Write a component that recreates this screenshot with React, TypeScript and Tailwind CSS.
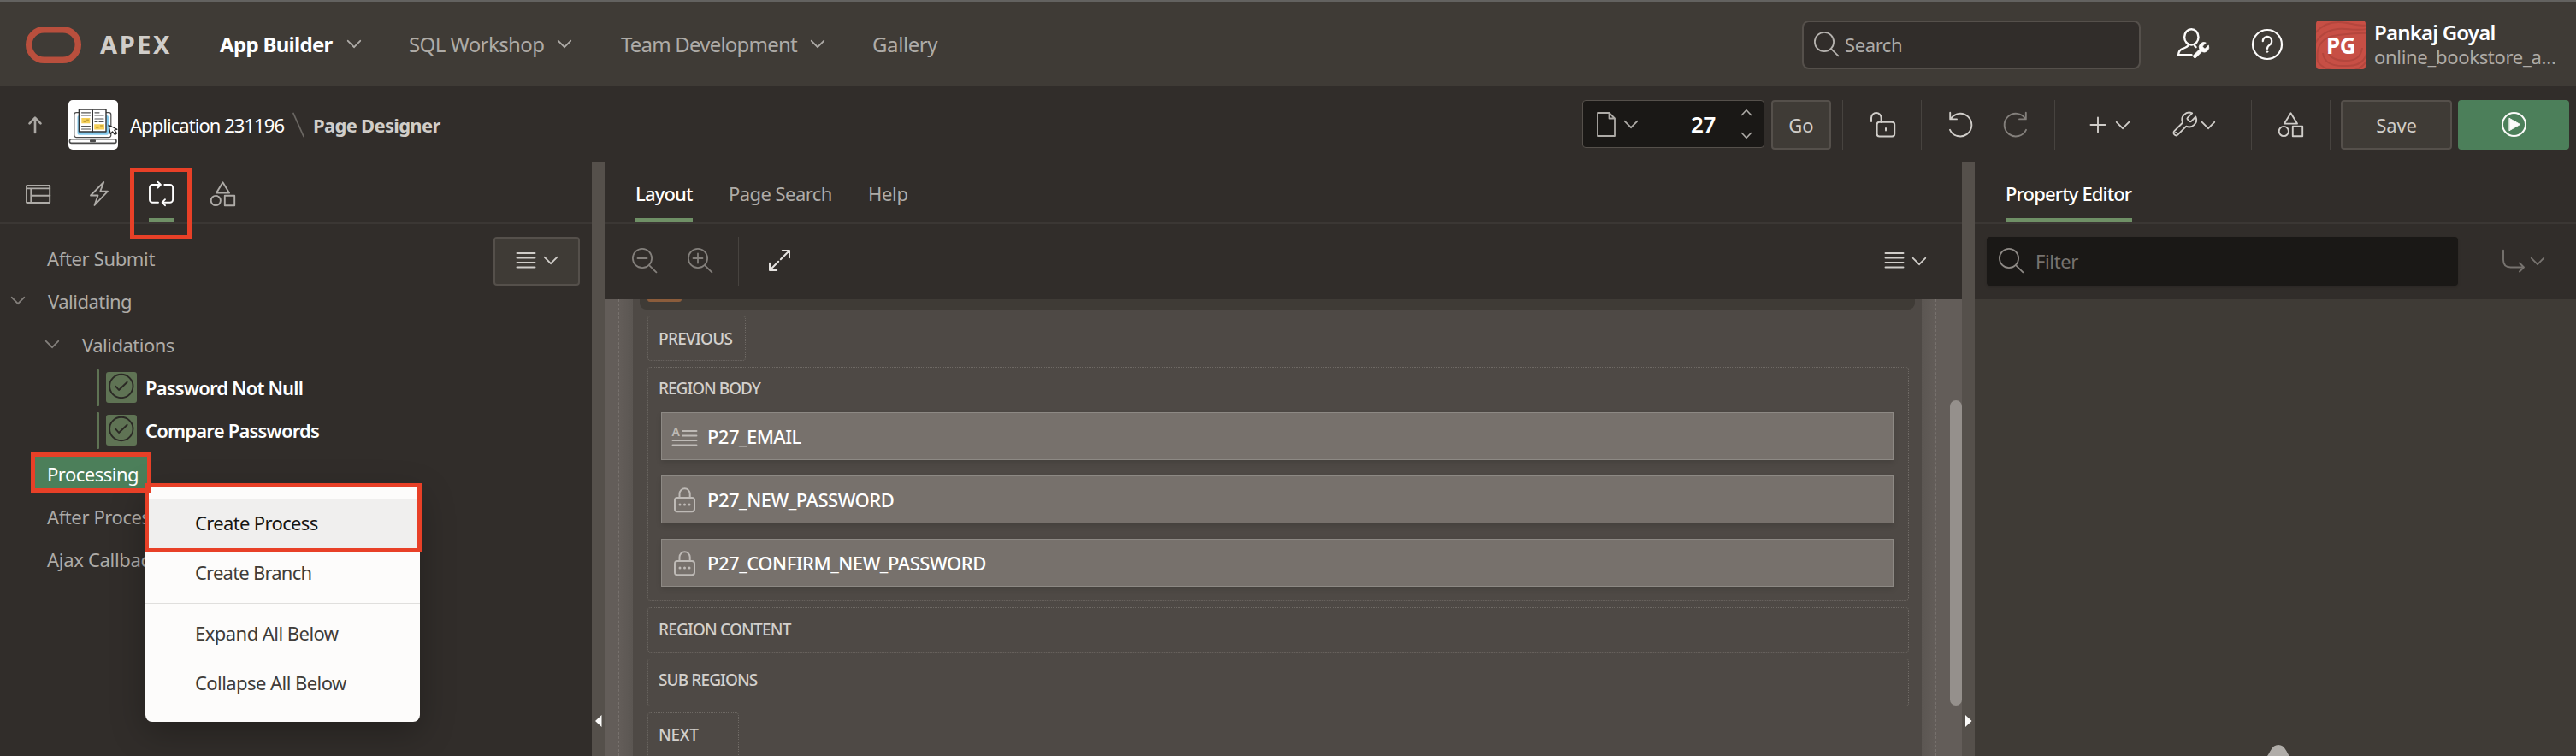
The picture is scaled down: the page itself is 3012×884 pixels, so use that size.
import type { ReactNode } from 'react';

type IconProps = { w: number; h: number; className?: string; sw?: number; children: ReactNode };

function Icon({ w, h, className = '', sw = 2, children }: IconProps) {
  return (
    <svg
      width={w}
      height={h}
      viewBox={`0 0 ${w} ${h}`}
      fill="none"
      stroke="currentColor"
      strokeWidth={sw}
      strokeLinecap="round"
      strokeLinejoin="round"
      className={`block shrink-0 overflow-visible ${className}`}
    >
      {children}
    </svg>
  );
}

const Chevron = ({ className = '' }: { className?: string }) => (
  <Icon w={16} h={9} className={className} sw={1.9}>
    <path d="M0.8 0.8 8 8.2 15.2 0.8" />
  </Icon>
);

const Lines = () => (
  <Icon w={22} h={19} sw={1.9}>
    <path d="M.5 1h21M.5 6.5h21M.5 12h21M.5 17.5h21" />
  </Icon>
);

const Magnifier = ({ className = '', children }: { className?: string; children?: ReactNode }) => (
  <Icon w={29} h={29} className={className} sw={1.8}>
    <circle cx="12" cy="12" r="11.1" />
    <path d="m20 20.2 8.4 8.2" />
    {children}
  </Icon>
);

const Shapes = ({ className = '' }: { className?: string }) => (
  <Icon w={29} h={29} className={className} sw={1.9}>
    <path d="M14.5 1.2 22 13.6H7z" />
    <circle cx="6.3" cy="22.5" r="5.6" />
    <rect x="16.8" y="16.8" width="11.4" height="11.4" />
  </Icon>
);

const wrenchPath =
  'M14.7 6.3a1 1 0 0 0 0 1.4l1.6 1.6a1 1 0 0 0 1.4 0l3.77-3.77a6 6 0 0 1-7.94 7.94l-6.91 6.91a2.12 2.12 0 0 1-3-3l6.91-6.91a6 6 0 0 1 7.94-7.94l-3.76 3.76z';

const BookIcon = () => (
  <Icon w={58} h={58} className="rounded-[5px] bg-white text-[#4b4b4b]" sw={1.2}>
    <rect x="6.8" y="14.6" width="43" height="29" rx="2.5" fill="#fff" />
    <rect x="10.5" y="18" width="36.5" height="22.8" rx="2" fill="#86cbee" stroke="none" />
    <path d="M12.4 11H44v26H12.4z" fill="#fff" stroke="#333" strokeWidth="1.4" />
    <path d="M28.2 12v25" stroke="#333" strokeWidth="1.6" />
    <path d="M15.5 14.8h10M15.5 18h10M31 14.8h5M31 18h10M31 22h10M31 25.5h3M36 25.5h5M15.5 30.5h10M15.5 34h10" stroke="#555" />
    <path d="M15.3 21h10v6.2h-10zM30.2 28.2h11.8v6.2H30.2z" fill="#f5cf57" stroke="none" />
    <path d="M18 25.2h2M21.5 23.2h2M32.5 32h2.5M37.5 30h2.5" stroke="#a98a2c" strokeWidth="1" />
    <rect x="1.4" y="45.8" width="54.6" height="4.6" rx="2.2" fill="#fff" strokeWidth="1.6" />
    <rect x="25" y="46.2" width="7" height="3" rx="1" fill="#4b4b4b" stroke="none" />
    <path d="m47 29.2 2.2 10.4 2.3-2.6 3 3.6 2.2-1.8-3-3.6 3.3-1z" fill="#fff" stroke="#222" />
  </Icon>
);

const Divider = ({ className }: { className: string }) => <div className={`h-[58px] w-px bg-[#47433f] ${className}`} />;

function NavItem({ label, className }: { label: string; className: string }) {
  return (
    <div className={`flex items-center justify-between whitespace-nowrap ${className}`}>
      <span>{label}</span>
      <Chevron />
    </div>
  );
}

function Header() {
  return (
    <header className="flex h-[99px] shrink-0 items-center bg-[#3f3b36] pl-[30px] text-[24px] leading-[32px] text-[#aeaba7]">
      <Icon w={65} h={43} sw={7.5} className="mt-[2px] text-[#b94f3d]">
        <rect x="3.75" y="3.75" width="57.5" height="35.5" rx="17.7" />
      </Icon>
      <span className="ml-[22px] w-[140px] text-[29px] font-bold tracking-[2.6px] text-[#d0cdc9]">APEX</span>
      <NavItem label="App Builder" className="w-[165px] font-bold tracking-[-0.7px] text-white [&>svg]:text-[#aeaba7]" />
      <NavItem label="SQL Workshop" className="ml-[56px] w-[190px] tracking-[-0.58px]" />
      <NavItem label="Team Development" className="ml-[58px] w-[238px] tracking-[-0.8px]" />
      <span className="ml-[56px] tracking-[-0.4px]">Gallery</span>

      <div className="ml-auto mt-[2px] flex h-[57px] w-[396px] items-center rounded-[8px] border-2 border-[#55504b] bg-[#312d2a] pl-[12px]">
        <Magnifier className="-mt-[2px] text-[#b5b2ae]" />
        <span className="-mt-px ml-[7px] text-[22px] tracking-[-0.4px]">Search</span>
      </div>
      <Icon w={37} h={37} sw={2.4} className="ml-[43px] text-[#fcfbfa]">
        <ellipse cx="16.3" cy="10.4" rx="8.2" ry="9.2" />
        <path d="M12.6 18.6v1.2c-.6 2.2-3 3-6.3 4-3.4 1.1-5 2.8-5.2 7.500H16.500" />
        <path d="M20 18.600v1.200q.4 1.400 1.600 2.300" />
        <g transform="translate(15.500 14.500) scale(0.970)">
          <path d={wrenchPath} fill="currentColor" strokeWidth="0.600" />
        </g>
      </Icon>
      <Icon w={36} h={36} sw={2.2} className="ml-[50px] text-[#fcfbfa]">
        <circle cx="18" cy="18" r="17" />
        <path d="M12.800 14.200a5.200 5.200 0 1 1 8.200 4.200c-2 1.400-3 2.400-3 4.600" />
        <circle cx="18" cy="26.600" r="0.800" fill="currentColor" strokeWidth="1" />
      </Icon>
      <div className="relative ml-[39px] mt-[2px] flex h-[57px] w-[58px] items-center justify-center overflow-hidden rounded-[4px] bg-[#c74f45]">
        <svg viewBox="0 0 58 57" className="absolute inset-0" fill="none" stroke="#b4463d" strokeWidth="2">
          <path d="M-2 16Q12-2 36 3T60 4M-2 28Q10 8 34 10T60 9M2 48Q-2 20 26 17T60 15M60 34Q58 54 34 53Q10 54 8 38M54 32Q52 48 33 47Q16 46 14 36M60 46Q52 60 34 59Q10 60 2 48" />
        </svg>
        <span className="relative text-[26px] font-bold tracking-[-0.5px] text-white">PG</span>
      </div>
      <div className="ml-[10px] w-[236px] whitespace-nowrap leading-[29px]">
        <div className="text-[24px] font-semibold tracking-[-0.8px] text-white">Pankaj Goyal</div>
        <div className="text-[22px] tracking-[-0.3px]">online_bookstore_a…</div>
      </div>
    </header>
  );
}

function Toolbar() {
  return (
    <div className="flex h-[89px] shrink-0 items-start border-b border-[#3f3b38] bg-[#312d2a] pl-[33px] pt-[16px] text-[22px] leading-[30px] text-[#d0cdc9]">
      <div className="flex h-[58px] items-center">
        <Icon w={16} h={20} sw={2.6} className="text-[#aaa7a3]">
          <path d="M8 19V2M1.500 8.300 8 1.700l6.500 6.600" />
        </Icon>
        <div className="ml-[31px]">
          <BookIcon />
        </div>
        <span className="ml-[14px] w-[190px] whitespace-nowrap tracking-[-0.95px] text-white">Application 231196</span>
        <Icon w={14} h={28} sw={1.8} className="text-[#6b6763]">
          <path d="M1 .5 13 27.500" />
        </Icon>
        <span className="ml-[10px] whitespace-nowrap font-bold tracking-[-0.7px]">Page Designer</span>
      </div>

      <div className="ml-auto flex h-[56px] w-[213px] rounded-[4px] border border-[#55504b] bg-[#1a1816]">
        <div className="flex flex-1 items-center pl-[16px] text-[#aeaba7]">
          <Icon w={22} h={29} sw={1.8}>
            <path d="M1 1h13.500L21 7.500V28H1zM14.500 1v6.500H21" />
          </Icon>
          <Chevron className="ml-[10px]" />
          <span className="ml-auto pr-[14px] text-[26px] font-semibold tracking-[-0.4px] text-white">27</span>
        </div>
        <div className="flex w-[42px] flex-col items-center justify-between border-l border-[#55504b] py-[10px] text-[#aeaba7]">
          <Icon w={12} h={7} sw={1.6}>
            <path d="M.6 6.500 6 .8l5.400 5.700" />
          </Icon>
          <Icon w={12} h={7} sw={1.6}>
            <path d="M.6.5 6 6.200 11.400.5" />
          </Icon>
        </div>
      </div>
      <button className="ml-[8px] h-[58px] w-[70px] rounded-[4px] border-2 border-[#55504b] bg-[#3f3b36] tracking-[0.1px]">Go</button>
      <Divider className="ml-[13px]" />
      <Icon w={29} h={29} className="ml-[32px] mt-[14px]" sw={2}>
        <path d="M1 11V6.800a5.800 5.800 0 0 1 11.600 0V12" />
        <rect x="7.600" y="11.800" width="20.600" height="16.600" rx="3" />
        <path d="M18 19v2.400" />
      </Icon>
      <Divider className="ml-[30px]" />
      <Icon w={28} h={29} className="ml-[32px] mt-[14px]" sw={1.9}>
        <path d="M1.200.8v7.600h7.800M1.800 8A13.300 13.300 0 1 1 1 20.800" />
      </Icon>
      <Icon w={28} h={29} className="ml-[35px] mt-[14px] text-[#837f7b]" sw={1.9}>
        <path d="M26.800.8v7.600H19M26.200 8A13.300 13.300 0 1 0 27 20.800" />
      </Icon>
      <Divider className="ml-[32px]" />
      <Icon w={18} h={18} className="ml-[41px] mt-[20px]" sw={1.9}>
        <path d="M9 .5v17M.5 9h17" />
      </Icon>
      <Chevron className="ml-[12px] mt-[25px]" />
      <Icon w={28} h={28} className="ml-[50px] mt-[14px]">
        <g transform="translate(-2.700 -2.200) scale(1.400)">
          <path d={wrenchPath} strokeWidth="1.350" />
        </g>
        <circle cx="4" cy="24" r="0.700" strokeWidth="1" />
      </Icon>
      <Chevron className="ml-[6px] mt-[25px]" />
      <Divider className="ml-[42px]" />
      <Shapes className="ml-[31px] mt-[14px]" />
      <Divider className="ml-[31px]" />
      <button className="ml-[12px] h-[58px] w-[130px] rounded-[4px] border-2 border-[#55504b] bg-[#3f3b36] tracking-[-0.1px]">Save</button>
      <button className="ml-[7px] mr-[8px] flex h-[58px] w-[130px] items-center justify-center rounded-[4px] bg-[#4c7f5a] text-[#fcfbfa]">
        <Icon w={29} h={29} sw={2} className="-mt-px">
          <circle cx="14.500" cy="14.500" r="13.500" />
          <path d="M9.200 7.400 21.600 14.500 9.200 21.600z" fill="currentColor" strokeWidth="1" />
        </Icon>
      </button>
    </div>
  );
}

type RowProps = { label: string; pad: string; text: string; open?: boolean; check?: boolean };

const rows: RowProps[] = [
  { label: 'After Submit', pad: 'pl-[55px]', text: 'tracking-[-0.35px]' },
  { label: 'Validating', pad: 'pl-[13px]', text: 'ml-[27px] tracking-[-0.5px]', open: true },
  { label: 'Validations', pad: 'pl-[53px]', text: 'ml-[27px] tracking-[-0.5px]', open: true },
  { label: 'Password Not Null', pad: 'pl-[113px]', text: 'ml-[10px] font-semibold tracking-[-0.83px] text-white', check: true },
  { label: 'Compare Passwords', pad: 'pl-[113px]', text: 'ml-[10px] font-semibold tracking-[-0.8px] text-white', check: true },
  {
    label: 'Processing',
    pad: 'pl-[38px]',
    text: 'flex h-[40px] w-[136px] items-center bg-[#4c7f5a] pl-[17px] tracking-[-0.5px] text-white',
  },
  { label: 'After Processing', pad: 'pl-[55px]', text: 'tracking-[-0.4px]' },
  { label: 'Ajax Callback', pad: 'pl-[55px]', text: 'tracking-[-0.3px]' },
];

function TreeRow({ label, pad, text, open, check }: RowProps) {
  return (
    <li className={`flex h-[50.3px] items-center whitespace-nowrap ${pad}`}>
      {open && <Chevron className="mt-[-1px] text-[#837f7b]" />}
      {check && (
        <>
          <i className="h-[43px] w-[3px] rounded-[1px] bg-[#5f7354]" />
          <Icon w={36} h={36} sw={1.9} className="ml-[8px] rounded-[3px] bg-[#5f7354] text-[#2b2925]">
            <circle cx="17.800" cy="16.500" r="13.700" />
            <path d="m11.400 16.800 3.600 4.200 9.700-9.200" />
          </Icon>
        </>
      )}
      <span className={text}>{label}</span>
    </li>
  );
}

function LeftPanel() {
  return (
    <section className="flex w-[692px] shrink-0 flex-col overflow-hidden bg-[#312d2a] text-[#aeaba7]">
      <div className="flex h-[72px] shrink-0 items-start border-b-2 border-[#3b3734] pl-[30px]">
        <Icon w={29} h={22} className="mt-[26px]" sw={1.9}>
          <rect x="1" y="1" width="27.200" height="20" rx="0.500" />
          <path d="M1 4.400h27.200M6.300 4.400V21M6.300 12.800h22" />
        </Icon>
        <Icon w={22} h={29} className="ml-[46px] mt-[22px]" sw={1.8}>
          <path d="M16.300 1 1 16.500h8.500L5.500 28 21 11.600h-8.700z" />
        </Icon>
        <div className="ml-[47px] h-[70px] w-[29px] border-b-[5px] border-[#6f9066] pt-[22px]">
          <Icon w={29} h={29} className="text-white" sw={1.9}>
            <path d="M11 24.700H4.300A3.300 3.300 0 0 1 1 21.400V7.300A3.300 3.300 0 0 1 4.300 4H14M10.500.8 14 4l-3.500 3.500M18.300 4h6.500a3.300 3.300 0 0 1 3.300 3.300v14.100a3.300 3.300 0 0 1-3.300 3.300h-9.100M19 21.200l-3.300 3.500 3.300 3.500" />
          </Icon>
        </div>
        <Shapes className="ml-[43px] mt-[22px]" />
      </div>
      <div className="flex items-start pt-[15px] text-[22px] leading-[30px]">
        <ul className="flex-1">
          {rows.map((r) => (
            <TreeRow key={r.label} {...r} />
          ))}
        </ul>
        <button className="mr-[14px] flex h-[57px] w-[101px] items-center justify-center gap-[10px] rounded-[4px] border-2 border-[#55504b] bg-[#3f3b36] pb-[2px] text-[#d0cdc9]">
          <Lines />
          <Chevron />
        </button>
      </div>
    </section>
  );
}

function Tab({ label, className }: { label: string; className: string }) {
  return (
    <span className={`flex h-[70px] items-center whitespace-nowrap border-b-[5px] pt-[7px] leading-[30px] ${className}`}>{label}</span>
  );
}

const LockIcon = () => (
  <Icon w={25} h={29} sw={2}>
    <path d="M6.500 11.500V7.400a6.100 6.100 0 0 1 12.200 0v4.100" />
    <rect x="1" y="12" width="23" height="16.200" rx="3" />
    <path d="M7 20h.01M12.500 20h.01M18 20h.01" strokeWidth="3" />
  </Icon>
);

const TextIcon = () => (
  <Icon w={29} h={23} sw={1.9}>
    <text x="-0.500" y="11" fontSize="14" fontFamily="Noto Sans, sans-serif" fontWeight="600" fill="currentColor" stroke="none">
      A
    </text>
    <path d="M12 5h16.500M12 10.500h16.500M.5 16h28M.5 21.500h28" />
  </Icon>
);

function PageItem({ label, lock, className }: { label: string; lock?: boolean; className: string }) {
  return (
    <div className="flex h-[56px] w-[1441px] items-center border border-[#8d8984] bg-[#77716c] pl-[12px] text-[22px] leading-[30px] text-white shadow-[0_3px_6px_rgba(0,0,0,0.12)]">
      <span className="flex w-[29px] justify-center text-[#bebab6]">{lock ? <LockIcon /> : <TextIcon />}</span>
      <span className={`-mt-px ml-[12px] font-medium ${className}`}>{label}</span>
    </div>
  );
}

const slot = 'rounded-[4px] border border-dotted border-[#6e6964] pl-[12px]';

function LayoutPanel() {
  return (
    <section className="flex w-[1587px] shrink-0 flex-col overflow-hidden bg-[#312d2a] text-[22px] text-[#aeaba7]">
      <div className="flex h-[72px] shrink-0 border-b-2 border-[#3b3734] pl-[36px]">
        <Tab label="Layout" className="w-[67px] border-[#6f9066] font-medium tracking-[-0.85px] text-white" />
        <Tab label="Page Search" className="ml-[42px] w-[122px] border-transparent tracking-[-0.56px]" />
        <Tab label="Help" className="ml-[41px] border-transparent tracking-[-0.3px]" />
      </div>
      <div className="flex h-[88px] shrink-0 pl-[32px]">
        <Magnifier className="mt-[28px] text-[#837f7b]">
          <path d="M6.500 12h11" />
        </Magnifier>
        <Magnifier className="ml-[36px] mt-[28px] text-[#837f7b]">
          <path d="M6.500 12h11M12 6.500v11" />
        </Magnifier>
        <Divider className="ml-[30px] mt-[15px]" />
        <Icon w={25} h={25} className="ml-[35px] mt-[30px] text-[#e5e2df]" sw={2}>
          <path d="M15.800 1H24v8.200M24 1 13.800 11.200M1 15.800V24h8.200M1 24l10.200-10.200" />
        </Icon>
        <div className="ml-auto mr-[42px] mt-[33px] flex items-start gap-[10px] text-[#d0cdc9]">
          <Lines />
          <Chevron className="mt-[6px]" />
        </div>
      </div>
      <div className="flex min-h-0 flex-1 bg-[#635d59]">
        <div className="w-[17px] shrink-0 border-r border-dashed border-[#77716d]" />
        <div className="w-[16px] shrink-0 bg-linear-to-r from-[#635d59] to-[#5b5652]" />
        <div className="flex w-[1507px] shrink-0 flex-col items-start overflow-hidden bg-[#4e4945] pl-[17px] text-[19px] font-medium leading-[26px] text-[#d3d0cc]">
          <div className="ml-[-9px] h-[12px] w-[1491px] shrink-0 rounded-b-[8px] bg-[#3f3b36] pl-[9px]">
            <div className="h-[3px] w-[40px] rounded-b-[3px] bg-[#8b5c3b]" />
          </div>
          <div className={`mt-[7px] flex h-[53px] w-[115px] shrink-0 items-center tracking-[-0.7px] ${slot}`}>PREVIOUS</div>
          <div className={`mt-[7px] h-[274px] w-[1475px] shrink-0 ${slot}`}>
            <div className="h-[52px] leading-[48px] tracking-[-1px]">REGION BODY</div>
            <div className="ml-[3px] flex flex-col gap-[18px]">
              <PageItem label="P27_EMAIL" className="tracking-[-0.55px]" />
              <PageItem label="P27_NEW_PASSWORD" lock className="tracking-[-0.5px]" />
              <PageItem label="P27_CONFIRM_NEW_PASSWORD" lock className="tracking-[-0.48px]" />
            </div>
          </div>
          <div className={`mt-[7px] flex h-[53px] w-[1475px] shrink-0 items-center pb-[2px] tracking-[-0.8px] ${slot}`}>REGION CONTENT</div>
          <div className={`mt-[7px] flex h-[56px] w-[1475px] shrink-0 items-center pb-[6px] tracking-[-0.88px] ${slot}`}>SUB REGIONS</div>
          <div className={`mt-[7px] flex h-[56px] w-[107px] shrink-0 items-center pb-[5px] tracking-[-0.25px] ${slot}`}>NEXT</div>
        </div>
        <div className="w-[16px] shrink-0 bg-linear-to-r from-[#5b5652] to-[#635d59]" />
        <div className="w-[17px] shrink-0 border-l border-dashed border-[#77716d]" />
        <div className="w-[14px] shrink-0 pt-[118px]">
          <div className="h-[357px] rounded-[7px] bg-[#95908c]" />
        </div>
      </div>
    </section>
  );
}

function PropertyPanel() {
  return (
    <section className="flex flex-1 flex-col overflow-hidden bg-[#3f3b36] text-[22px] leading-[30px]">
      <div className="flex h-[72px] shrink-0 border-b-2 border-[#3b3734] bg-[#312d2a] pl-[36px]">
        <Tab label="Property Editor" className="w-[148px] border-[#6f9066] font-medium tracking-[-0.85px] text-white" />
      </div>
      <div className="flex h-[88px] shrink-0 items-start bg-[#312d2a] pl-[14px] pt-[15px] text-[#77736f]">
        <div className="flex h-[57px] w-[551px] items-center rounded-[4px] bg-[#1a1816] pl-[14px] shadow-[0_2px_3px_rgba(0,0,0,0.15)]">
          <Magnifier className="-mt-[2px] text-[#8c8884]" />
          <span className="-mt-px ml-[14px] tracking-[-0.37px]">Filter</span>
        </div>
        <Icon w={26} h={26} className="ml-[52px] mt-[15px]" sw={1.9}>
          <path d="M1 .8v11C1 17.500 4 20.500 9.500 20.500H25M20 15.500l5 5-5 5" />
        </Icon>
        <Chevron className="ml-[7px] mt-[24px]" />
      </div>
      <div className="flex flex-1 items-end pl-[342px]">
        <svg width="26" height="14" viewBox="0 0 26 14" className="block">
          <path d="M0 14C3 11 5 1 13 1s10 10 13 13z" fill="#b0ada9" />
        </svg>
      </div>
    </section>
  );
}

function Splitter({ dir }: { dir: 'left' | 'right' }) {
  return (
    <div className="flex w-[15px] shrink-0 items-end justify-center bg-[#55504b] pb-[34px]">
      <svg width="8" height="14" viewBox="0 0 8 14" className="block">
        <path d={dir === 'left' ? 'M7.500 0v14L0 7z' : 'M0 0v14L7.500 7z'} fill="#fcfbfa" />
      </svg>
    </div>
  );
}

function ContextMenu() {
  return (
    <div className="absolute left-[170px] top-[568px] h-[276px] w-[321px] rounded-[8px] bg-[#fdfcfb] pt-[15px] text-[22px] leading-[57px] text-[#403c39] shadow-[0_12px_40px_rgba(0,0,0,0.28)]">
      <div className="h-[58px] bg-[#f0efee] pl-[58px] tracking-[-0.65px] text-[#161513]">Create Process</div>
      <div className="h-[58px] pl-[58px] tracking-[-0.78px]">Create Branch</div>
      <div className="my-[6px] h-px bg-[#e0dfdd]" />
      <div className="h-[58px] pl-[58px] tracking-[-0.54px]">Expand All Below</div>
      <div className="h-[58px] pl-[58px] tracking-[-0.56px]">Collapse All Below</div>
    </div>
  );
}

export default function App() {
  return (
    <div className="relative flex h-[884px] w-[3012px] flex-col overflow-hidden border-t-2 border-[#636260] bg-[#312d2a] font-['Noto_Sans',sans-serif]">
      <Header />
      <Toolbar />
      <main className="flex min-h-0 flex-1">
        <LeftPanel />
        <Splitter dir="left" />
        <LayoutPanel />
        <Splitter dir="right" />
        <PropertyPanel />
      </main>
      <div className="absolute inset-x-0 -top-[2px] h-[884px]">
        <ContextMenu />
        <div className="absolute left-[152px] top-[196px] h-[84px] w-[72px] border-[5px] border-[#e84027]" />
        <div className="absolute left-[36px] top-[529px] h-[47px] w-[141px] border-[5px] border-[#e84027]" />
        <div className="absolute left-[169px] top-[565px] h-[81px] w-[324px] border-[5px] border-[#e84027]" />
      </div>
    </div>
  );
}
